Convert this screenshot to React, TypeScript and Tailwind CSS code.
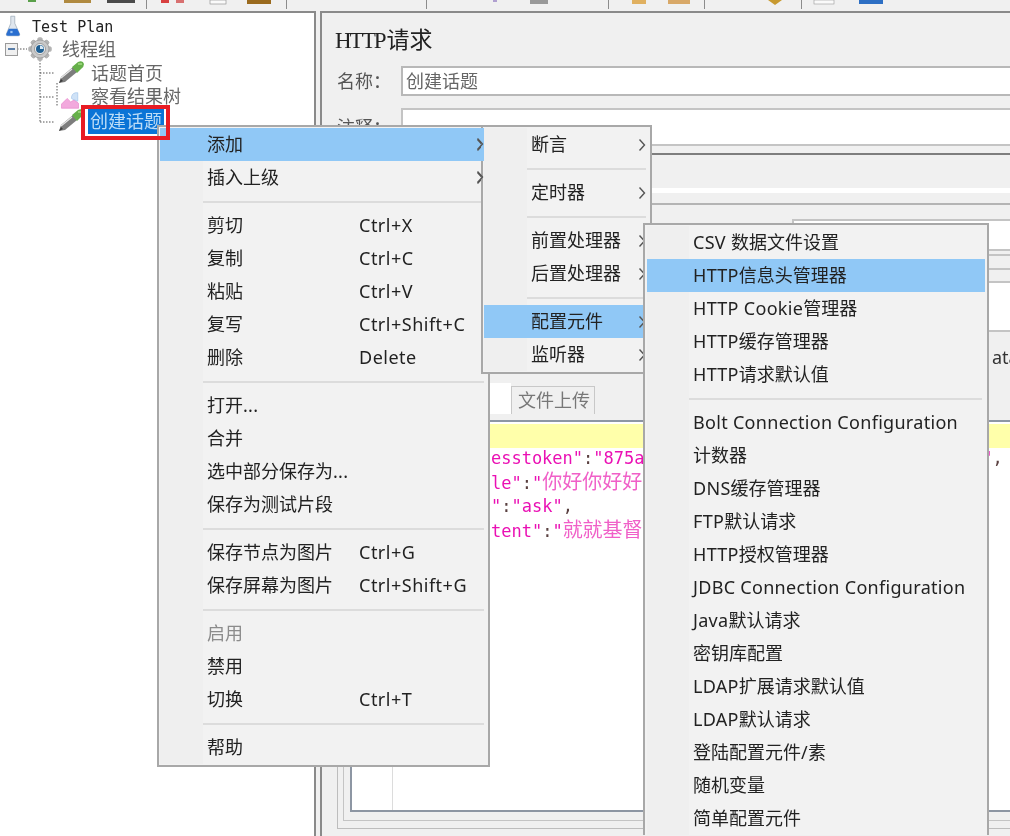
import React from "react";

type Row = {
  label?: string;
  shortcut?: string;
  arrow?: boolean;
  active?: boolean;
  disabled?: boolean;
  sep?: boolean;
};

const mainRows: Row[] = [
  { label: "添加", arrow: true, active: true },
  { label: "插入上级", arrow: true },
  { sep: true },
  { label: "剪切", shortcut: "Ctrl+X" },
  { label: "复制", shortcut: "Ctrl+C" },
  { label: "粘贴", shortcut: "Ctrl+V" },
  { label: "复写", shortcut: "Ctrl+Shift+C" },
  { label: "删除", shortcut: "Delete" },
  { sep: true },
  { label: "打开..." },
  { label: "合并" },
  { label: "选中部分保存为..." },
  { label: "保存为测试片段" },
  { sep: true },
  { label: "保存节点为图片", shortcut: "Ctrl+G" },
  { label: "保存屏幕为图片", shortcut: "Ctrl+Shift+G" },
  { sep: true },
  { label: "启用", disabled: true },
  { label: "禁用" },
  { label: "切换", shortcut: "Ctrl+T" },
  { sep: true },
  { label: "帮助" },
];

const addRows: Row[] = [
  { label: "断言", arrow: true },
  { sep: true },
  { label: "定时器", arrow: true },
  { sep: true },
  { label: "前置处理器", arrow: true },
  { label: "后置处理器", arrow: true },
  { sep: true },
  { label: "配置元件", arrow: true, active: true },
  { label: "监听器", arrow: true },
];

const configRows: Row[] = [
  { label: "CSV 数据文件设置" },
  { label: "HTTP信息头管理器", active: true },
  { label: "HTTP Cookie管理器" },
  { label: "HTTP缓存管理器" },
  { label: "HTTP请求默认值" },
  { sep: true },
  { label: "Bolt Connection Configuration" },
  { label: "计数器" },
  { label: "DNS缓存管理器" },
  { label: "FTP默认请求" },
  { label: "HTTP授权管理器" },
  { label: "JDBC Connection Configuration" },
  { label: "Java默认请求" },
  { label: "密钥库配置" },
  { label: "LDAP扩展请求默认值" },
  { label: "LDAP默认请求" },
  { label: "登陆配置元件/素" },
  { label: "随机变量" },
  { label: "简单配置元件" },
];

const Chevron = ({ className }: { className?: string }) => (
  <svg width="8" height="14" viewBox="0 0 8 14" className={className}>
    <path d="M1.5 1.5 L6.5 7 L1.5 12.5" fill="none" stroke="#555" strokeWidth="1.4" />
  </svg>
);

// latin runs are a touch wider than the font gives, CJK stays on the 18px grid
const Label = ({ text }: { text: string }) => (
  <>
    {text.split(/([\x00-\x7f]+)/).map((part, i) =>
      i % 2 === 1 ? (
        <span key={i} className="tracking-[0.3px]">
          {part}
        </span>
      ) : (
        part
      ),
    )}
  </>
);

const MenuRow = ({ row, labelWidth, gutter }: { row: Row; labelWidth: string; gutter: string }) => {
  if (row.sep) {
    return (
      <div className="flex h-[15px] items-center">
        <div className={`h-full shrink-0 bg-[#efefef] ${gutter}`} />
        <div className="mr-[3px] h-[2px] flex-1 bg-[#dcdcdc]" />
      </div>
    );
  }
  return (
    <div className={`flex h-[33px] items-center ${row.active ? "bg-[#90c8f6]" : ""}`}>
      <div className={`h-full shrink-0 ${gutter} ${row.active ? "" : "bg-[#efefef]"}`} />
      <div
        className={`flex flex-1 items-center pl-[4px] whitespace-nowrap ${
          row.disabled ? "text-[#8c8c8c]" : "text-[#222222]"
        }`}
      >
        <span className={labelWidth}>
          <Label text={row.label ?? ""} />
        </span>
        {row.shortcut && <span className="tracking-[0.5px]">{row.shortcut}</span>}
      </div>
      {row.arrow && <Chevron className="mr-[3px] shrink-0" />}
    </div>
  );
};

const Flask = () => (
  <svg width="16" height="22" viewBox="0 0 18 24">
    <path d="M6.5 1 L11 1 L11 9 L16.5 21 Q17 23 15 23 L3 23 Q1 23 1.5 21 L6.5 9 Z" fill="#dfe6ee" stroke="#9aa7b5" strokeWidth="0.8" />
    <path d="M4.2 15 L13.8 15 L16.5 21 Q17 23 15 23 L3 23 Q1 23 1.5 21 Z" fill="#2a6fd0" />
    <rect x="6" y="17.5" width="2.5" height="2.5" fill="#9cc4f2" />
  </svg>
);

const Gear = () => {
  const teeth = [0, 45, 90, 135, 180, 225, 270, 315];
  return (
    <svg width="26" height="24" viewBox="0 0 26 24">
      {teeth.map((a) => (
        <rect key={a} x="10.5" y="0.5" width="5" height="23" rx="1.5" fill="#b4b4b4" transform={`rotate(${a} 13 12)`} />
      ))}
      <circle cx="13" cy="12" r="9" fill="#c9c9c9" stroke="#9a9a9a" strokeWidth="0.8" />
      <circle cx="13" cy="12" r="5.5" fill="#f4f4f4" stroke="#8a8a8a" strokeWidth="0.8" />
      <circle cx="13" cy="12" r="4" fill="#1f5f92" />
      <path d="M13 8.5 A3.5 3.5 0 0 1 16.5 12 L13 12 Z" fill="#d8e8f4" />
    </svg>
  );
};

const Pipette = () => (
  <svg width="28" height="24" viewBox="0 0 28 24">
    <path d="M2 22 L4 16 L16 6 L20 11 L8 21 Z" fill="#7d7d7d" />
    <path d="M4 17 L15 8" stroke="#e8e8e8" strokeWidth="1.2" />
    <path d="M2 22 L4 18 L6 20 Z" fill="#3d3d3d" />
    <path d="M15 6 L21 1 Q26 -1 27 3 Q27 6 24 8 L20 12 Z" fill="#66b04a" />
    <path d="M21 3 L25 3" stroke="#a4dd84" strokeWidth="1.5" />
  </svg>
);

const ResultTree = () => (
  <svg width="20" height="17" viewBox="0 0 28 24" className="mt-[8px]">
    <path d="M2 23 L2 17 L10 9 L15 14 L20 11 L26 16 L26 23 Z" fill="#f2a9dd" stroke="#e26cc0" strokeWidth="0.7" />
    <path d="M16 9 Q16 2 22 1 L25 1 L25 13 L20 11 Q17 10 16 9 Z" fill="#cfe2f7" stroke="#8db6e4" strokeWidth="0.7" />
  </svg>
);

const TreeLines = () => (
  <svg width="60" height="90" viewBox="0 0 60 90" className="absolute top-[25px] left-0">
    <path d="M17 9 L27 9 M40 20 L40 82 M40 33 L55 33 M40 57 L55 57 M40 82 L55 82 M57 43 L57 67" stroke="#555" strokeWidth="1" strokeDasharray="1.5 1.5" fill="none" />
  </svg>
);

const Toolbar = () => (
  <div className="h-[11px] shrink-0 bg-[#f0f0f0]">
    <svg width="1010" height="11" viewBox="0 0 1010 11">
      {[146, 286, 426, 608, 704, 801].map((x) => (
        <rect key={x} x={x} y="0" width="1" height="9" fill="#8c8c8c" />
      ))}
      <rect x="28" y="0" width="8" height="2" fill="#5aa04a" />
      <rect x="64" y="0" width="27" height="3" fill="#b08a40" />
      <rect x="107" y="0" width="28" height="3" fill="#4a4a4a" />
      <rect x="161" y="0" width="8" height="3" fill="#d84040" />
      <rect x="176" y="0" width="8" height="3" fill="#d87070" />
      <rect x="210" y="0" width="16" height="4" fill="#fafafa" stroke="#888" strokeWidth="0.6" />
      <rect x="247" y="0" width="24" height="4" fill="#9a6a1e" />
      <rect x="493" y="0" width="4" height="2" fill="#b0a0d0" />
      <rect x="530" y="0" width="18" height="4" fill="#999" />
      <rect x="632" y="0" width="14" height="4" fill="#e0b060" />
      <rect x="668" y="0" width="22" height="4" fill="#d8a868" />
      <path d="M768 0 L782 0 L775 5 Z" fill="#c89a30" />
      <rect x="814" y="0" width="20" height="4" fill="#fafafa" stroke="#999" strokeWidth="0.6" />
      <rect x="859" y="0" width="24" height="4" fill="#2d6fc4" />
    </svg>
  </div>
);

const Tree = () => (
  <div className="relative h-full w-[316px] shrink-0 border-t-2 border-r-2 border-[#8a8a8a] bg-white pt-[2px]">
    <div className="relative h-[130px]">
      <TreeLines />
      <div className="flex h-[22px] items-center pl-[5px]">
        <Flask />
        <span className="mt-[2px] ml-[11px] font-['DejaVu_Sans_Mono',monospace] text-[15px] leading-none text-[#222]">Test Plan</span>
      </div>
      <div className="flex h-[24px] items-center pl-[5px]">
        <div className="z-10 flex h-[13px] w-[13px] items-center justify-center border border-[#9a9a9a] bg-[#f0f0f0]">
          <div className="h-[2px] w-[7px] bg-[#5a7ea8]" />
        </div>
        <div className="z-10 ml-[9px]">
          <Gear />
        </div>
        <span className="ml-[9px] text-[#666]">线程组</span>
      </div>
      <div className="flex h-[24px] items-center pl-[57px]">
        <Pipette />
        <span className="ml-[6px] text-[#666]">话题首页</span>
      </div>
      <div className="flex h-[23px] items-center pl-[60px]">
        <ResultTree />
        <span className="ml-[11px] text-[#666]">察看结果树</span>
      </div>
      <div className="flex h-[26px] items-center pl-[57px]">
        <Pipette />
        <span className="ml-[3px] bg-[#0a74d6] px-[2px] leading-[26px] text-[#bcdcf6]">创建话题</span>
      </div>
    </div>
  </div>
);

const CodeLine = ({ children }: { children: React.ReactNode }) => (
  <div className="h-[24px] leading-[24px] whitespace-nowrap">{children}</div>
);

const Str = ({ children }: { children: React.ReactNode }) => <span className="text-[#ea10b4]">{children}</span>;
const Cn = ({ children }: { children: React.ReactNode }) => <span className="text-[20px] text-[#f060c8]">{children}</span>;
const Op = ({ children }: { children: React.ReactNode }) => <span className="text-[#5a4040]">{children}</span>;

const Editor = () => (
  <div className="flex h-full min-w-0 flex-1 flex-col border-b border-l border-[#bdbdbd] bg-[#f0f0f0] pb-[7px] pl-[5px]">
    <div className="flex flex-1 flex-col border-b border-l border-[#c4c4c4] pb-[8px] pl-[6px]">
      <div className="flex flex-1 border-t-2 border-b-2 border-l-2 border-[#8d96a3] bg-white">
        <div className="w-[41px] shrink-0 border-r border-[#dcdcdc]" />
        <div className="min-w-0 flex-1 overflow-hidden font-['DejaVu_Sans_Mono','Noto_Sans_CJK_SC',monospace] text-[17px]">
          <div className="mt-[2px] h-[24px] bg-[#ffffaa]" />
          <div className="-mt-[2px] pl-[57px]">
            <CodeLine>
              <Str>"accesstoken"</Str>
              <Op>:</Op>
              <Str>"875a1c2e90b34d7fa6e18c05d2f7b64a9e31c"</Str>
              <Op>,</Op>
            </CodeLine>
            <CodeLine>
              <Str>"title"</Str>
              <Op>:</Op>
              <Str>"</Str>
              <Cn>你好你好好</Cn>
              <Str>"</Str>
              <Op>,</Op>
            </CodeLine>
            <CodeLine>
              <Str>"tag"</Str>
              <Op>:</Op>
              <Str>"ask"</Str>
              <Op>,</Op>
            </CodeLine>
            <CodeLine>
              <Str>"content"</Str>
              <Op>:</Op>
              <Str>"</Str>
              <Cn>就就基督</Cn>
              <Str>"</Str>
            </CodeLine>
          </div>
        </div>
      </div>
    </div>
  </div>
);

const Detail = () => (
  <div className="flex h-full min-w-0 flex-1 flex-col border-t-2 border-l-2 border-[#8a8a8a] bg-[#f0f0f0]">
    <div className="flex h-[53px] items-center pt-[1px] pl-[13px] font-['Liberation_Serif','Noto_Sans_CJK_SC',serif] text-[23px] leading-none text-[#222]">
      <span className="tracking-[-2px]">HTTP</span>
      <span className="ml-[2px]">请求</span>
    </div>
    <div className="flex h-[30px] items-center pl-[15px]">
      <span className="w-[64px] text-[#555]">名称：</span>
      <div className="flex h-[30px] flex-1 items-center border-2 border-r-0 border-[#b8b8b8] bg-white pl-[3px] text-[#666]">创建话题</div>
    </div>
    <div className="mt-[12px] flex h-[38px] items-center pl-[15px]">
      <span className="w-[64px] text-[#555]">注释：</span>
      <div className="h-[38px] flex-1 border-2 border-r-0 border-[#c4c4c4] bg-white" />
    </div>
    <div className="mt-[7px] h-[35px] border-t-2 border-[#7e7e7e]" />
    <div className="h-[5px] bg-white" />
    <div className="h-[10px]" />
    <div className="h-[16px] border-t-2 border-[#b4b4b4]" />
    <div className="flex h-[30px] justify-end">
      <div className="h-[30px] w-[218px] border-t-2 border-l-2 border-[#c4c4c4] bg-white" />
    </div>
    <div className="h-[5px] border-t-2 border-[#c4c4c4]" />
    <div className="h-[14px] border-t-2 border-[#c4c4c4]" />
    <div className="h-[15px] border-y-2 border-[#c4c4c4]" />
    <div className="h-[47px] bg-white" />
    <div className="flex min-h-0 flex-1 border-t-2 border-[#c4c4c4] pl-[15px]">
      <div className="flex h-[497px] min-w-0 flex-1 flex-col">
        <div className="flex h-[49px] justify-end pt-[12px]">
          <span className="w-[18px] overflow-hidden text-[#333]">ata</span>
        </div>
        <div className="h-[39px] pl-[153px]">
          <div className="flex h-[33px] items-end">
            <div className="h-[31px] w-[21px] bg-white" />
            <div className="flex h-[28px] w-[84px] items-center justify-center border-x border-t border-[#c8c8c8] pl-[2px] text-[#777]">文件上传</div>
          </div>
        </div>
        <div className="min-h-0 flex-1">
          <Editor />
        </div>
      </div>
    </div>
  </div>
);

export default function App() {
  return (
    <div className="relative flex h-[836px] w-[1010px] flex-col overflow-hidden bg-[#f0f0f0] font-['Noto_Sans','Noto_Sans_CJK_SC',sans-serif] text-[18px] blur-[0.5px]">
      <Toolbar />
      <div className="flex min-h-0 flex-1 gap-[4px]">
        <Tree />
        <Detail />
      </div>

      {/* red annotation round the selected node */}
      <div className="absolute top-[105px] left-[81px] z-40 h-[35px] w-[89px] border-4 border-[#e81c24]" />

      <div className="absolute top-[125px] left-[157px] z-10 w-[333px] border-2 border-[#a8a8a8] bg-[#f2f2f2] p-[1px]">
        {mainRows.map((row, i) => (
          <MenuRow key={i} row={row} labelWidth="w-[152px]" gutter="w-[43px]" />
        ))}
      </div>

      <div className="absolute top-[125px] left-[481px] z-20 w-[171px] border-2 border-[#a8a8a8] bg-[#f2f2f2] p-[1px]">
        {addRows.map((row, i) => (
          <MenuRow key={i} row={row} labelWidth="" gutter="w-[43px]" />
        ))}
        {/* the parent's highlight and arrows sit over this menu's edge */}
        <div className="absolute top-[1px] -left-[2px] h-[33px] w-[3px] bg-[#90c8f6]" />
        <Chevron className="absolute top-[10px] -left-[7px]" />
        <Chevron className="absolute top-[43px] -left-[7px]" />
      </div>

      <div className="absolute top-[223px] left-[643px] z-30 w-[346px] border-x-2 border-t-2 border-[#a8a8a8] bg-[#f2f2f2] px-[2px] pt-[1px]">
        {configRows.map((row, i) => (
          <MenuRow key={i} row={row} labelWidth="" gutter="w-[42px]" />
        ))}
      </div>
    </div>
  );
}
